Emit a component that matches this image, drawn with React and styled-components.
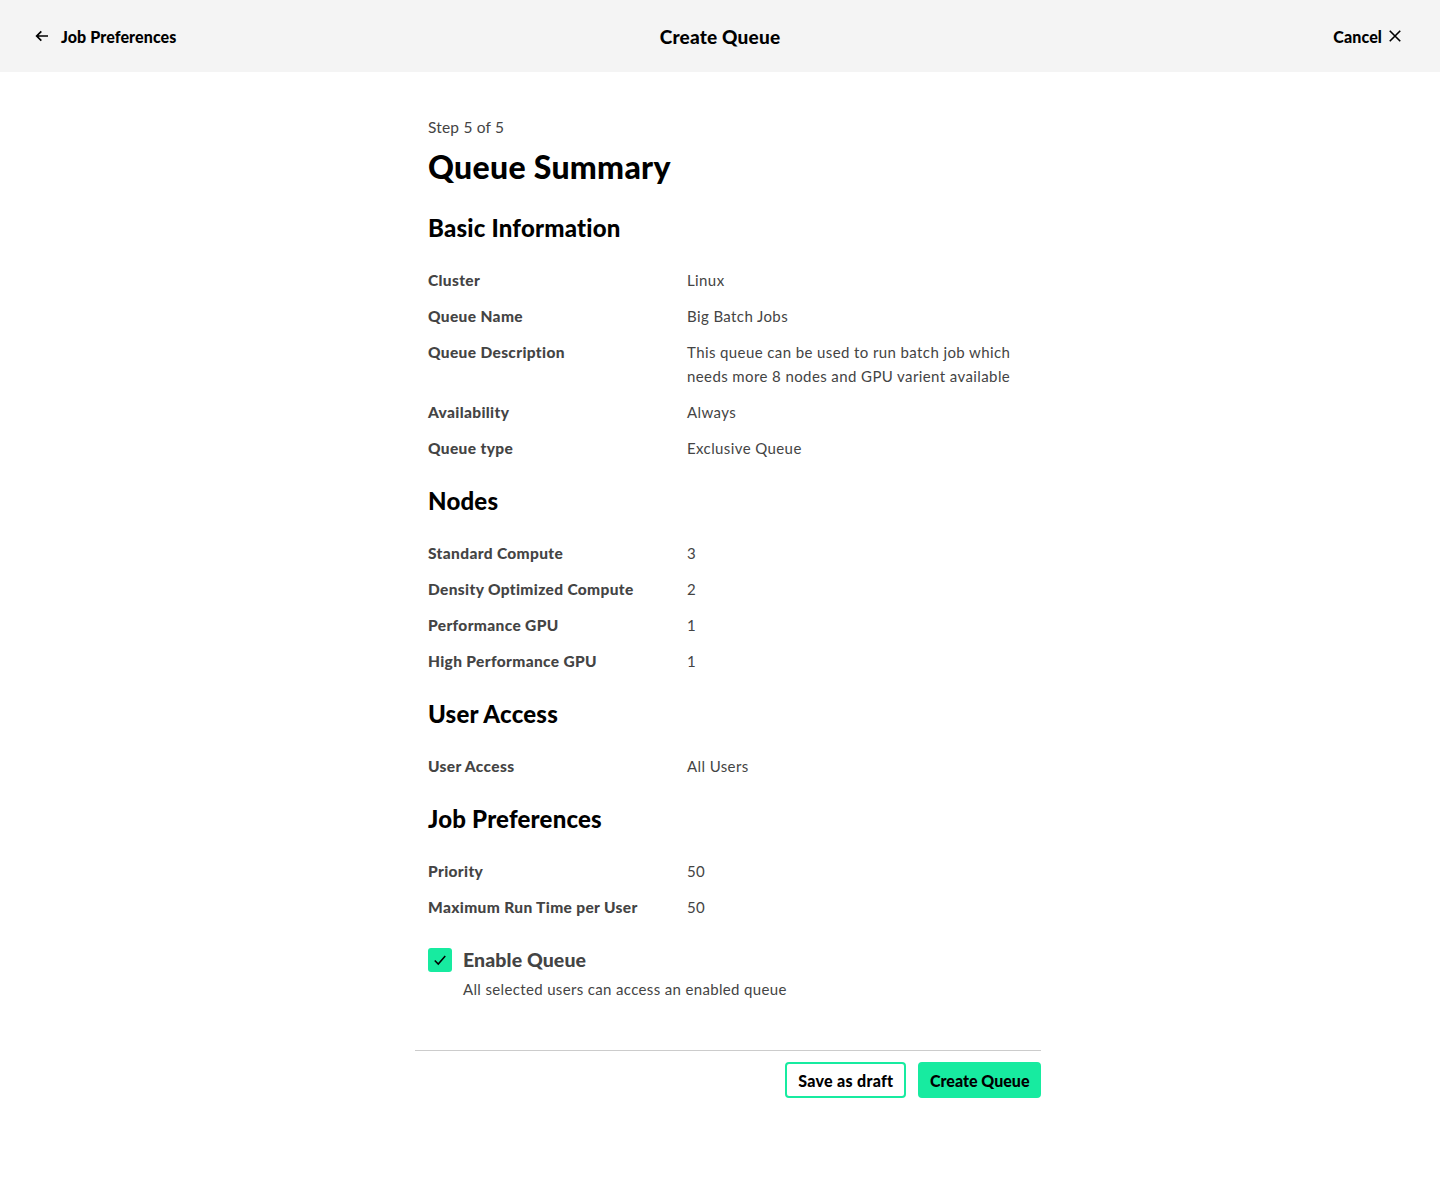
import React from 'react';
import styled, { createGlobalStyle } from 'styled-components';

const GlobalStyle = createGlobalStyle`
  * { box-sizing: border-box; }
  body {
    margin: 0;
    background: #ffffff;
    font-family: Lato, "Liberation Sans", Arial, sans-serif;
    color: #444444;
  }
`;

const Header = styled.header`
  height: 72px;
  background: #f4f4f4;
  display: grid;
  grid-template-columns: 1fr auto 1fr;
  align-items: center;
  padding: 0 38px 0 34px;
`;

const HeaderLink = styled.button`
  display: flex;
  align-items: center;
  justify-self: ${(p) => (p.$end ? 'end' : 'start')};
  flex-direction: ${(p) => (p.$end ? 'row-reverse' : 'row')};
  gap: ${(p) => (p.$end ? '6px' : '11px')};
  background: none;
  border: none;
  padding: 0;
  font-family: inherit;
  font-size: 16px;
  font-weight: 900;
  letter-spacing: 0.1px;
  color: #000;
  cursor: pointer;
`;

const HeaderTitle = styled.h1`
  margin: 0 0 0 4px;
  font-size: 19px;
  font-weight: 900;
  letter-spacing: 0.2px;
  color: #000;
`;

const Main = styled.main`
  width: 626px;
  margin: 0 0 0 415px;
  padding: 43px 0 60px;
`;

const Body = styled.div`
  padding-left: 13px;
`;

const StepText = styled.div`
  font-size: 15.5px;
  line-height: 24px;
  letter-spacing: 0.2px;
  color: #444;
`;

const PageTitle = styled.h2`
  margin: 8px 0 0;
  font-size: 32px;
  line-height: 40px;
  font-weight: 900;
  letter-spacing: 0.3px;
  color: #000;
`;

const SectionTitle = styled.h3`
  margin: 0;
  padding-top: ${(p) => (p.$first ? '23px' : '23px')};
  font-size: 24px;
  line-height: 36px;
  font-weight: 900;
  letter-spacing: 0.2px;
  color: #000;
`;

const Rows = styled.dl`
  margin: 22px 0 0;
  display: grid;
  grid-template-columns: 259px 1fr;
  row-gap: 12px;
`;

const Label = styled.dt`
  font-size: 15.5px;
  line-height: 24px;
  font-weight: 900;
  letter-spacing: 0.35px;
  color: #444;
`;

const Value = styled.dd`
  margin: 0;
  font-size: 15px;
  line-height: 24px;
  letter-spacing: 0.4px;
  color: #444;
  max-width: 340px;
`;

const CheckRow = styled.div`
  margin-top: 29px;
  display: grid;
  grid-template-columns: 24px 1fr;
  column-gap: 11px;
  row-gap: 5px;
  align-items: center;
`;

const Box = styled.span`
  width: 24px;
  height: 24px;
  border-radius: 3px;
  background: #17eba0;
  display: flex;
  align-items: center;
  justify-content: center;
`;

const CheckLabel = styled.span`
  font-size: 19.5px;
  line-height: 24px;
  font-weight: 900;
  letter-spacing: 0.1px;
  color: #444;
`;

const CheckHint = styled.span`
  grid-column: 2;
  font-size: 15px;
  line-height: 24px;
  letter-spacing: 0.35px;
  color: #444;
`;

const Footer = styled.footer`
  margin-top: 49px;
  border-top: 1px solid #cccccc;
  padding-top: 11px;
  display: flex;
  justify-content: flex-end;
  gap: 12px;
`;

const Button = styled.button`
  height: 36px;
  padding: 0 ${(p) => (p.$primary ? '9.5px' : '11px')};
  border-radius: 4px;
  border: 2px solid #17eba0;
  background: ${(p) => (p.$primary ? '#17eba0' : '#fff')};
  font-family: inherit;
  font-size: 16px;
  font-weight: 900;
  letter-spacing: ${(p) => (p.$primary ? '0' : '0.3px')};
  color: #000;
  cursor: pointer;
`;

const sections = [
  {
    title: 'Basic Information',
    rows: [
      ['Cluster', 'Linux'],
      ['Queue Name', 'Big Batch Jobs'],
      ['Queue Description', 'This queue can be used to run batch job which needs more 8 nodes and GPU varient available'],
      ['Availability', 'Always'],
      ['Queue type', 'Exclusive Queue'],
    ],
  },
  {
    title: 'Nodes',
    rows: [
      ['Standard Compute', '3'],
      ['Density Optimized Compute', '2'],
      ['Performance GPU', '1'],
      ['High Performance GPU', '1'],
    ],
  },
  {
    title: 'User Access',
    rows: [['User Access', 'All Users']],
  },
  {
    title: 'Job Preferences',
    rows: [
      ['Priority', '50'],
      ['Maximum Run Time per User', '50'],
    ],
  },
];

const ArrowLeft = () => (
  <svg width="16" height="16" viewBox="0 0 24 24" fill="none" stroke="#000" strokeWidth="2.6">
    <path d="M21 12H4M11 5l-7 7 7 7" />
  </svg>
);

const CloseIcon = () => (
  <svg width="14" height="14" viewBox="0 0 24 24" fill="none" stroke="#000" strokeWidth="2.8">
    <path d="M3 3l18 18M21 3L3 21" />
  </svg>
);

const CheckIcon = () => (
  <svg width="14" height="14" viewBox="0 0 24 24" fill="none" stroke="#000" strokeWidth="2.6">
    <path d="M3 13l6 6L21 5" />
  </svg>
);

export default function App() {
  return (
    <>
      <GlobalStyle />
      <Header>
        <HeaderLink>
          <ArrowLeft />
          Job Preferences
        </HeaderLink>
        <HeaderTitle>Create Queue</HeaderTitle>
        <HeaderLink $end>
          <CloseIcon />
          Cancel
        </HeaderLink>
      </Header>
      <Main>
        <Body>
          <StepText>Step 5 of 5</StepText>
          <PageTitle>Queue Summary</PageTitle>
          {sections.map((s, i) => (
            <section key={s.title}>
              <SectionTitle $first={i === 0}>{s.title}</SectionTitle>
              <Rows>
                {s.rows.map(([k, v]) => (
                  <React.Fragment key={k}>
                    <Label>{k}</Label>
                    <Value>{v}</Value>
                  </React.Fragment>
                ))}
              </Rows>
            </section>
          ))}
          <CheckRow>
            <Box>
              <CheckIcon />
            </Box>
            <CheckLabel>Enable Queue</CheckLabel>
            <CheckHint>All selected users can access an enabled queue</CheckHint>
          </CheckRow>
        </Body>
        <Footer>
          <Button>Save as draft</Button>
          <Button $primary>Create Queue</Button>
        </Footer>
      </Main>
    </>
  );
}
